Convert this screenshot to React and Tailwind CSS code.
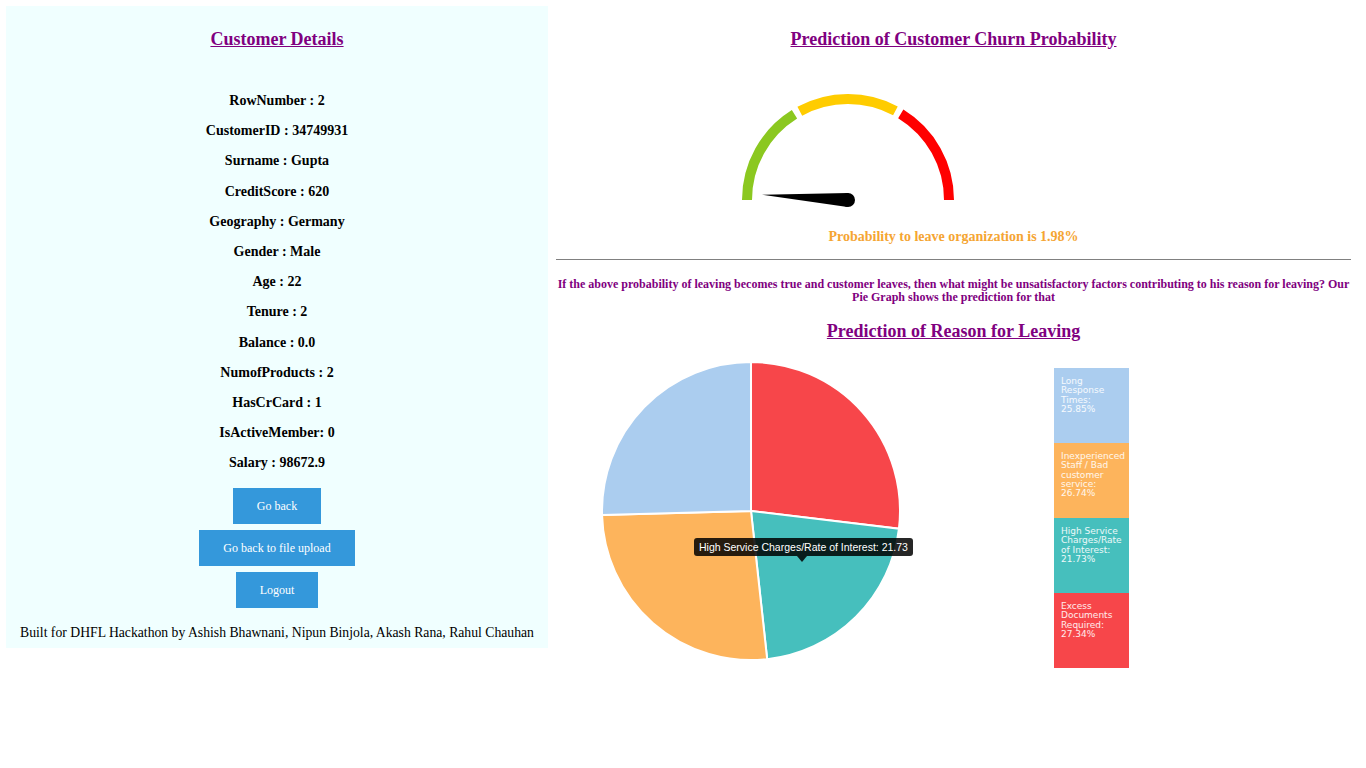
import React from 'react';

const customer = [
  ['RowNumber', '2'],
  ['CustomerID', '34749931'],
  ['Surname', 'Gupta'],
  ['CreditScore', '620'],
  ['Geography', 'Germany'],
  ['Gender', 'Male'],
  ['Age', '22'],
  ['Tenure', '2'],
  ['Balance', '0.0'],
  ['NumofProducts', '2'],
  ['HasCrCard', '1'],
];

const reasons = [
  { label: 'Excess Documents Required', value: 27.34, color: '#f7464a' },
  { label: 'High Service Charges/Rate of Interest', value: 21.73, color: '#46bfbd' },
  { label: 'Inexperienced Staff / Bad customer service', value: 26.74, color: '#fdb45c' },
  { label: 'Long Response Times', value: 25.85, color: '#abcdef' },
];

const legend = [
  { text: ['Long', 'Response', 'Times:', '25.85%'], bg: 'bg-[#abcdef]' },
  { text: ['Inexperienced', 'Staff / Bad', 'customer', 'service:', '26.74%'], bg: 'bg-[#fdb45c]' },
  { text: ['High Service', 'Charges/Rate', 'of Interest:', '21.73%'], bg: 'bg-[#46bfbd]' },
  { text: ['Excess', 'Documents', 'Required:', '27.34%'], bg: 'bg-[#f7464a]' },
];

// point on a circle, angle in degrees counter-clockwise from +x
const pt = (cx, cy, r, deg) => {
  const a = (deg * Math.PI) / 180;
  return [cx + r * Math.cos(a), cy - r * Math.sin(a)];
};

const arc = (cx, cy, r, from, to) => {
  const [x1, y1] = pt(cx, cy, r, from);
  const [x2, y2] = pt(cx, cy, r, to);
  return `M ${x1} ${y1} A ${r} ${r} 0 0 1 ${x2} ${y2}`;
};

const Gauge = ({ percent }) => {
  const cx = 110;
  const cy = 110;
  const ang = 180 - percent * 1.8;
  const [tx, ty] = pt(cx, cy, 86, ang);
  const [ax, ay] = pt(cx, cy, 7, ang + 90);
  const [bx, by] = pt(cx, cy, 7, ang - 90);
  return (
    <svg width="220" height="120" viewBox="0 0 220 120">
      <path d={arc(cx, cy, 101, 180, 122)} stroke="#8bc820" strokeWidth="10" fill="none" />
      <path d={arc(cx, cy, 101, 118.5, 62)} stroke="#ffcc00" strokeWidth="10" fill="none" />
      <path d={arc(cx, cy, 101, 58.5, 0)} stroke="#ff0000" strokeWidth="10" fill="none" />
      <polygon points={`${tx},${ty} ${ax},${ay} ${bx},${by}`} fill="#000" />
      <circle cx={cx} cy={cy} r="7" fill="#000" />
    </svg>
  );
};

const Pie = () => {
  const cx = 151;
  const cy = 151;
  const r = 149;
  const total = reasons.reduce((s, d) => s + d.value, 0);
  let start = 0;
  const slices = reasons.map((d) => {
    const sweep = (d.value / total) * 360;
    const a1 = 90 - start;
    const a2 = 90 - (start + sweep);
    start += sweep;
    const [x1, y1] = pt(cx, cy, r, a1);
    const [x2, y2] = pt(cx, cy, r, a2);
    const large = sweep > 180 ? 1 : 0;
    return (
      <path
        key={d.label}
        d={`M ${cx} ${cy} L ${x1} ${y1} A ${r} ${r} 0 ${large} 1 ${x2} ${y2} Z`}
        fill={d.color}
        stroke="#fff"
        strokeWidth="2"
      />
    );
  });
  return (
    <svg width="302" height="302" viewBox="0 0 302 302">
      {slices}
    </svg>
  );
};

export default function App() {
  return (
    <div className="min-h-[768px] bg-white flex items-start pt-[6px] pl-[6px] font-['Liberation_Serif',serif]">
      {/* Customer Details */}
      <div className="w-[542px] h-[642px] bg-[#f0ffff] flex flex-col items-center">
        <h3 className="mt-[23px] text-[18px] leading-[21px] font-bold text-[#800080] underline">Customer Details</h3>
        <div className="mt-[43px] flex flex-col items-center gap-[14.2px]">
          {customer.map(([k, v]) => (
            <p key={k} className="text-[14px] leading-4 font-bold text-black">
              {k} : {v}
            </p>
          ))}
          <p className="text-[14px] leading-4 font-bold text-black">IsActiveMember: 0</p>
          <p className="text-[14px] leading-4 font-bold text-black">Salary : 98672.9</p>
        </div>
        <div className="mt-[17px] flex flex-col items-center gap-[6px]">
          <button className="h-9 px-6 bg-[#3498db] text-white text-[12px]">Go back</button>
          <button className="h-9 px-6 bg-[#3498db] text-white text-[12px]">Go back to file upload</button>
          <button className="h-9 px-6 bg-[#3498db] text-white text-[12px]">Logout</button>
        </div>
        <p className="mt-4 text-[13.7px] leading-[18px] text-black whitespace-nowrap">
          Built for DHFL Hackathon by Ashish Bhawnani, Nipun Binjola, Akash Rana, Rahul Chauhan
        </p>
      </div>

      {/* Predictions */}
      <div className="ml-2 w-[795px] flex flex-col">
        <h3 className="mt-[23px] text-center text-[18px] leading-[21px] font-bold text-[#800080] underline">
          Prediction of Customer Churn Probability
        </h3>
        <div className="mt-[40px] ml-[182px]">
          <Gauge percent={1.98} />
        </div>
        <p className="mt-[19px] text-center text-[14px] leading-4 font-bold text-[#f5a533]">
          Probability to leave organization is 1.98%
        </p>
        <hr className="mt-[14px] border-t border-[#808080]" />
        <p className="mt-[18px] -mx-[1px] text-center text-[12px] leading-[13px] font-bold text-[#800080]">
          If the above probability of leaving becomes true and customer leaves, then what might be unsatisfactory factors contributing to his reason for leaving? Our Pie Graph shows the prediction for that
        </p>
        <h3 className="mt-[17px] text-center text-[18px] leading-[21px] font-bold text-[#800080] underline">
          Prediction of Reason for Leaving
        </h3>
        <div className="mt-[18px] flex items-start">
          <div className="relative ml-[44px]">
            <Pie />
            <div className="absolute left-[94px] top-[178px] h-[18px] px-[5px] rounded-[3px] bg-black/85 text-white text-[10.5px] leading-[18px] whitespace-nowrap font-['Liberation_Sans',Arial,sans-serif]">
              High Service Charges/Rate of Interest: 21.73
              <div className="absolute left-[103px] top-[18px] w-0 h-0 border-x-[5px] border-x-transparent border-t-[6px] border-t-black/85" />
            </div>
          </div>
          <div className="ml-[152px] mt-[8px] w-[75px] flex flex-col">
            {legend.map((l, i) => (
              <div key={i} className={`h-[75px] ${l.bg} pl-[7px] pt-[9px] text-white/90 text-[9px] leading-[9.3px] font-['DejaVu_Sans',Verdana,sans-serif]`}>
                {l.text.map((t) => (
                  <div key={t} className="whitespace-nowrap">{t}</div>
                ))}
              </div>
            ))}
          </div>
        </div>
      </div>
    </div>
  );
}
